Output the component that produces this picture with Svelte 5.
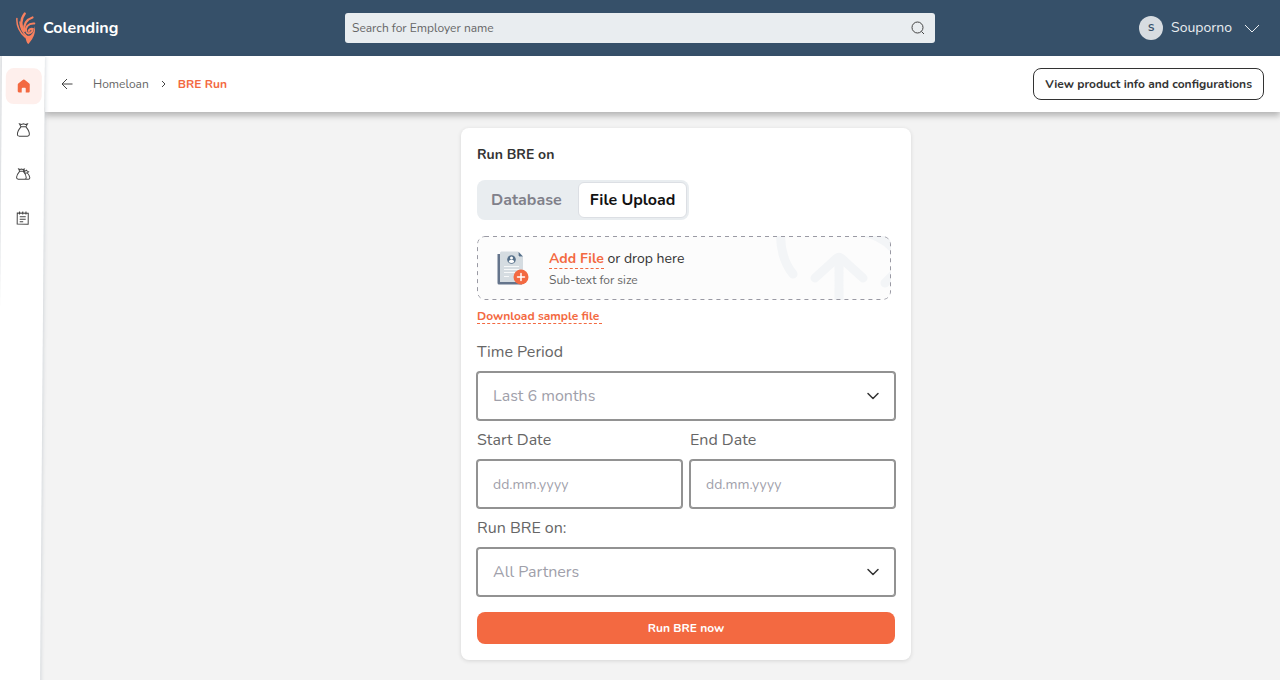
<!--
	BRE run page: top bar with employer search, icon rail, breadcrumb bar and the
	card that collects the run's source file, period and partners.
-->
<script lang="ts">
	type Source = 'database' | 'file';

	let source = $state<Source>('file');
	let search = $state('');
	let period = $state('6m');
	let startDate = $state('');
	let endDate = $state('');
	let partners = $state('all');
</script>

{#snippet chevron()}
	<svg class="chevron" width="14" height="8" viewBox="0 0 14 8" aria-hidden="true">
		<path d="M2 1.500 7 6.500l5-5" />
	</svg>
{/snippet}

<div class="page">
	<header class="topbar">
		<a class="brand" href="#home">
			<svg width="20" height="32" viewBox="0 0 20 32" aria-hidden="true">
				<g fill="none" stroke="#f8805f" stroke-linecap="round">
					<path stroke-width="1.500" d="M.9 6.500C.5 12.500 2 18.500 9 25" />
					<path stroke-width="1.500" d="M4 10C4.200 15 6 20 11 24.500" />
					<path stroke-width="2.200" d="M8.800 1.500C3.800 8 5 13.500 7.300 18" />
					<path stroke-width="2.200" d="M16.500 5.500C10.500 7.500 7.500 11 8.200 19" />
					<path stroke-width="2" d="M18.300 11.500C12 11 9 15.500 10.300 19.500c1.200 3.200 6 2 6.500-2.500-2-.5-3.800.5-4 2" />
				</g>
				<path fill="#f8805f" d="M6.500 21c3 3 5.500 3.500 8 2.200 2.300-1.400 3.700-4.200 4.200-9.200 1 7-1 10-2.500 13L12.500 32C10 31 11 27 6.500 21z" />
			</svg>
			<span>Colending</span>
		</a>

		<label class="search">
			<input type="text" aria-label="Search for Employer name" placeholder="Search for Employer name" bind:value={search} />
			<svg width="14" height="14" viewBox="0 0 14 14" aria-hidden="true">
				<circle cx="6.500" cy="6.500" r="5.500" />
				<path d="m10.500 10.500 2.500 2.500" />
			</svg>
		</label>

		<button type="button" class="account">
			<span class="avatar">S</span>
			<span>Souporno</span>
			<svg width="16" height="9" viewBox="0 0 16 9" aria-hidden="true">
				<path d="m1 1 7 7 7-7" />
			</svg>
		</button>
	</header>

	<div class="body">
		<nav class="rail" aria-label="Main">
			<a class="rail-link active" href="#home" aria-label="Home">
				<svg width="16" height="16" viewBox="0 0 16 16">
					<path
						d="M7.200 1.600a1.300 1.300 0 0 1 1.600 0l4.700 3.800c.3.300.5.600.5 1V13c0 .8-.5 1.300-1.200 1.300H10V10.500c0-.6-.4-1-1-1H7c-.6 0-1 .4-1 1v3.800H3.200C2.500 14.300 2 13.800 2 13V6.400c0-.4.2-.7.500-1z"
					/>
				</svg>
			</a>
			<a class="rail-link" href="#loans" aria-label="Loans">
				<svg width="16" height="16" viewBox="0 0 16 16">
					<path d="M5.500 4.500 4 1.700l2 .6 2-.6 2 .6 2-.6-1.500 2.800M5.200 4.500h5.600M5.500 4.700C4 6.500 2 9.500 2 12c0 1.300.8 2 2 2h8c1.200 0 2-.7 2-2 0-2.500-2-5.500-3.500-7.300" />
				</svg>
			</a>
			<a class="rail-link" href="#pools" aria-label="Pools">
				<svg width="16" height="16" viewBox="0 0 16 16">
					<path d="M4.500 5 3.500 2.800l1.500.5 1.300-.5 1.400.5 1.500-.5-1 2.200zM4.500 5.200C3 7 1.500 9 1.500 11.200c0 1.100.6 1.800 1.700 1.800h6.300c1.100 0 1.700-.7 1.700-1.800C11.200 9 9.800 7 8.200 5.200M9.500 6.500l-.3-2.200 1.300.4 1-.7.8 1.200 1.200.2-1.300 1.600M10 6.800h2.200c1.400 1.300 2.600 3 2.600 4.700 0 1-.6 1.500-1.500 1.500H10.500" />
				</svg>
			</a>
			<a class="rail-link" href="#reports" aria-label="Reports">
				<svg width="16" height="16" viewBox="0 0 16 16">
					<path d="M2.500 3h11v11h-11zM4.800 1.300v3M8 1.300v3M11.200 1.300v3M5 6.500h6M5 9h6M5 11.500h3.500" />
				</svg>
			</a>
		</nav>

		<div class="content">
			<div class="crumb-bar">
				<button type="button" class="back" aria-label="Back">
					<svg width="12" height="12" viewBox="0 0 12 12" aria-hidden="true">
						<path d="M11.500 6H1M6 1 1 6l5 5" />
					</svg>
				</button>
				<nav class="crumbs" aria-label="Breadcrumb">
					<a href="#homeloan">Homeloan</a>
					<svg width="5" height="8" viewBox="0 0 5 8" aria-hidden="true">
						<path d="m1 1 3 3-3 3" />
					</svg>
					<span class="current" aria-current="page">BRE Run</span>
				</nav>
				<button type="button" class="info-btn">View product info and configurations</button>
			</div>

			<main>
				<form class="card" onsubmit={(event) => event.preventDefault()}>
					<h1>Run BRE on</h1>

					<div class="tabs">
						<button
							type="button"
							class:active={source === 'database'}
							aria-pressed={source === 'database'}
							onclick={() => (source = 'database')}
						>
							Database
						</button>
						<button
							type="button"
							class:active={source === 'file'}
							aria-pressed={source === 'file'}
							onclick={() => (source = 'file')}
						>
							File Upload
						</button>
					</div>

					<div class="dropzone">
						<svg class="watermark" width="120" height="64" viewBox="0 0 120 64" aria-hidden="true">
							<path stroke-width="9" d="M68 64V22M44 42l22-20q2-1.500 4 0l22 20M114 47l8-8" />
							<path stroke-width="9" d="M9.500-6C9 12 12 26 22 38M92-4c12 2 22 8 30 16" />
						</svg>
						<svg class="outline" aria-hidden="true"><rect x="0.500" y="0.500" rx="7.500" /></svg>
						<svg class="file-icon" width="32" height="34" viewBox="0 0 32 34" aria-hidden="true">
							<path fill="#64748b" d="M.5 3h3v28H25v2.500H2A1.500 1.500 0 0 1 .5 32z" />
							<path fill="#d5dce1" d="M4.500.5H21V5.500h5V31H3V2A1.500 1.500 0 0 1 4.500.5z" />
							<path fill="#56708a" d="M21.500.8 26 5.500h-3.500a1 1 0 0 1-1-1z" />
							<circle cx="14.500" cy="8.500" r="4.300" fill="#56708a" />
							<circle cx="14.500" cy="7" r="1.500" fill="#fff" />
							<path fill="#fff" d="M11.800 11c0-3 5.400-3 5.400 0-1.500 1.200-3.900 1.200-5.400 0z" />
							<path stroke="#f6f8f9" d="M7 15.500h15M7 18.500h15M7 21.500h11M7 25.500h5" />
							<circle cx="24" cy="26" r="7.500" fill="#f36941" />
							<path stroke="#fff" stroke-width="1.500" stroke-linecap="round" d="M24 22.500v7M20.500 26h7" />
						</svg>
						<div class="drop-text">
							<p><label class="add-file">Add File<input type="file" class="sr-only" /></label> or drop here</p>
							<small>Sub-text for size</small>
						</div>
					</div>

					<a class="sample" href="#sample">Download sample file</a>

					<div class="field">
						<label for="period">Time Period</label>
						<div class="select">
							<select id="period" bind:value={period}>
								<option value="6m">Last 6 months</option>
								<option value="12m">Last 12 months</option>
							</select>
							{@render chevron()}
						</div>
					</div>

					<div class="dates">
						<div class="field">
							<label for="start">Start Date</label>
							<input id="start" type="text" placeholder="dd.mm.yyyy" bind:value={startDate} />
						</div>
						<div class="field">
							<label for="end">End Date</label>
							<input id="end" type="text" placeholder="dd.mm.yyyy" bind:value={endDate} />
						</div>
					</div>

					<div class="field">
						<label for="partners">Run BRE on:</label>
						<div class="select">
							<select id="partners" bind:value={partners}>
								<option value="all">All Partners</option>
							</select>
							{@render chevron()}
						</div>
					</div>

					<button type="submit" class="submit">Run BRE now</button>
				</form>
			</main>
		</div>
	</div>
</div>

<style>
	:global(body) {
		margin: 0;
	}

	.page {
		--navy: #365069;
		--orange: #f36941;
		--text: #333333;
		--muted: #666666;
		--placeholder: #a0a0aa;
		--outline: #929292;

		display: flex;
		flex-direction: column;
		min-height: 100vh;
		overflow: hidden;
		background: #f3f3f3;
		color: var(--text);
		font-family: Nunito, 'Open Sans', sans-serif;
		font-size: 12px;
		line-height: 16px;
	}

	.page * {
		box-sizing: border-box;
	}

	button,
	input,
	select {
		font: inherit;
		color: inherit;
	}

	button {
		padding: 0;
		border: none;
		background: none;
		cursor: pointer;
	}

	a {
		color: inherit;
		text-decoration: none;
	}

	svg {
		flex: none;
	}

	.topbar {
		display: grid;
		grid-template-columns: 1fr minmax(200px, 590px) 1fr;
		align-items: center;
		height: 56px;
		padding: 0 16px;
		background: var(--navy);
		color: #ffffff;
	}

	.brand {
		display: flex;
		align-items: center;
		gap: 7px;
		font-size: 16px;
		font-weight: 700;
		line-height: 24px;
	}

	.search {
		display: flex;
		align-items: center;
		height: 30px;
		padding: 0 10px 0 7px;
		border-radius: 3px;
		background: #e9edf0;
	}

	.search input {
		flex: 1;
		min-width: 0;
		padding: 0;
		border: none;
		outline: none;
		background: none;
		color: var(--text);
	}

	.search input::placeholder {
		color: var(--muted);
		opacity: 1;
	}

	.search svg,
	.back svg,
	.crumbs svg,
	.rail-link svg,
	.account svg {
		fill: none;
		stroke: #444444;
	}

	.account {
		display: flex;
		align-items: center;
		justify-self: end;
		gap: 8px;
		padding-right: 4px;
		color: #e9edf0;
		font-size: 14px;
	}

	.account svg {
		margin-left: 4px;
		stroke: #e9edf0;
	}

	.avatar {
		width: 24px;
		border-radius: 50%;
		background: #d7dce1;
		color: var(--navy);
		font-size: 10px;
		font-weight: 700;
		line-height: 24px;
	}

	.body {
		display: flex;
		flex: 1;
	}

	/* The rail leans slightly, so it runs past the bottom edge of the page. */
	.rail {
		z-index: 1;
		display: flex;
		flex: none;
		flex-direction: column;
		align-items: center;
		gap: 8px;
		width: 43px;
		margin: 0 0 -8px 2px;
		padding-top: 12px;
		background: #ffffff;
		box-shadow: 0 0 4px rgba(54, 80, 105, 0.25);
		clip-path: inset(0 -8px 0 -8px);
		transform: rotate(0.45deg);
		transform-origin: 0 0;
	}

	.rail-link {
		display: flex;
		align-items: center;
		justify-content: center;
		width: 36px;
		height: 36px;
		border-radius: 8px;
	}

	.rail-link.active {
		background: #feefec;
	}

	.rail-link.active svg {
		fill: var(--orange);
		stroke: none;
	}

	.content {
		flex: 1;
		min-width: 0;
	}

	.crumb-bar {
		display: flex;
		align-items: center;
		height: 56px;
		padding: 0 16px;
		background: #ffffff;
		box-shadow: 0 4px 6px rgba(0, 0, 0, 0.25);
	}

	.back {
		display: flex;
		margin-right: 20px;
	}

	.crumbs {
		display: flex;
		flex: 1;
		align-items: center;
		gap: 12px;
		color: var(--muted);
	}

	.current {
		color: var(--orange);
		font-weight: 700;
	}

	.info-btn {
		height: 32px;
		padding: 0 11px;
		border: 1px solid var(--text);
		border-radius: 8px;
		font-weight: 700;
	}

	main {
		display: flex;
		justify-content: center;
		padding: 16px 0 20px 47px;
	}

	.card {
		display: flex;
		flex-direction: column;
		width: 450px;
		padding: 16px;
		border-radius: 8px;
		background: #ffffff;
		box-shadow: 0 1px 4px rgba(0, 0, 0, 0.12);
	}

	h1 {
		margin: 0 0 14px;
		font-size: 14px;
		font-weight: 700;
		line-height: 22px;
	}

	.tabs {
		display: flex;
		align-self: flex-start;
		gap: 4px;
		height: 40px;
		margin-bottom: 16px;
		padding: 2px;
		border-radius: 8px;
		background: #e9edf0;
		font-size: 16px;
		font-weight: 700;
	}

	.tabs button {
		padding: 0 12px;
		border-radius: 6px;
		color: #80808a;
	}

	.tabs .active {
		padding: 0 11px;
		border: 1px solid #dcdfe4;
		background: #ffffff;
		color: #111111;
	}

	.dropzone {
		position: relative;
		display: flex;
		align-items: center;
		gap: 20px;
		height: 64px;
		margin: 0 4px 8px 0;
		padding-left: 20px;
		border-radius: 8px;
		background: #fcfcfc;
		overflow: hidden;
	}

	.watermark {
		position: absolute;
		top: 0;
		right: 0;
		fill: none;
		stroke: #f3f5f7;
		stroke-linecap: round;
	}

	.outline {
		position: absolute;
		inset: 0;
		width: 100%;
		height: 100%;
		pointer-events: none;
	}

	.outline rect {
		width: calc(100% - 1px);
		height: calc(100% - 1px);
		fill: none;
		stroke: #9a9aa4;
		stroke-dasharray: 4 4;
	}

	.drop-text {
		position: relative;
		color: var(--muted);
	}

	.drop-text p {
		margin: 0 0 2px;
		color: var(--text);
		font-size: 14px;
		line-height: 22px;
	}

	.drop-text small {
		display: block;
		font-size: 12px;
	}

	.add-file,
	.sample {
		border-bottom: 1px dashed var(--orange);
		color: var(--orange);
		font-weight: 700;
		cursor: pointer;
	}

	.sample {
		align-self: flex-start;
		height: 16px;
		margin-bottom: 16px;
		padding-right: 3px;
	}

	.sr-only {
		position: absolute;
		width: 1px;
		height: 1px;
		opacity: 0;
	}

	.field {
		display: flex;
		flex: 1;
		flex-direction: column;
		gap: 8px;
		min-width: 0;
		margin-bottom: 8px;
	}

	.field label {
		color: var(--muted);
		font-size: 16px;
		line-height: 24px;
	}

	.field input,
	.field select {
		width: 100%;
		height: 48px;
		padding: 0 15px;
		border: 1px solid var(--outline);
		border-radius: 3px;
		outline: none;
		background: #ffffff;
		box-shadow: 0 0 0 1px var(--outline);
		font-size: 14px;
	}

	.field select {
		appearance: none;
		color: var(--placeholder);
		font-size: 16px;
	}

	.field input::placeholder {
		color: var(--placeholder);
		opacity: 1;
	}

	.field input:focus-visible,
	.field select:focus-visible {
		border-color: var(--navy);
	}

	.dates {
		display: flex;
		gap: 8px;
	}

	.select {
		position: relative;
	}

	.chevron {
		position: absolute;
		top: 20px;
		right: 15px;
		fill: none;
		stroke: var(--text);
		stroke-width: 1.500;
		stroke-linecap: round;
		stroke-linejoin: round;
		pointer-events: none;
	}

	.submit {
		height: 32px;
		margin-top: 8px;
		border-radius: 8px;
		background: var(--orange);
		color: #ffffff;
		font-weight: 700;
	}
</style>
